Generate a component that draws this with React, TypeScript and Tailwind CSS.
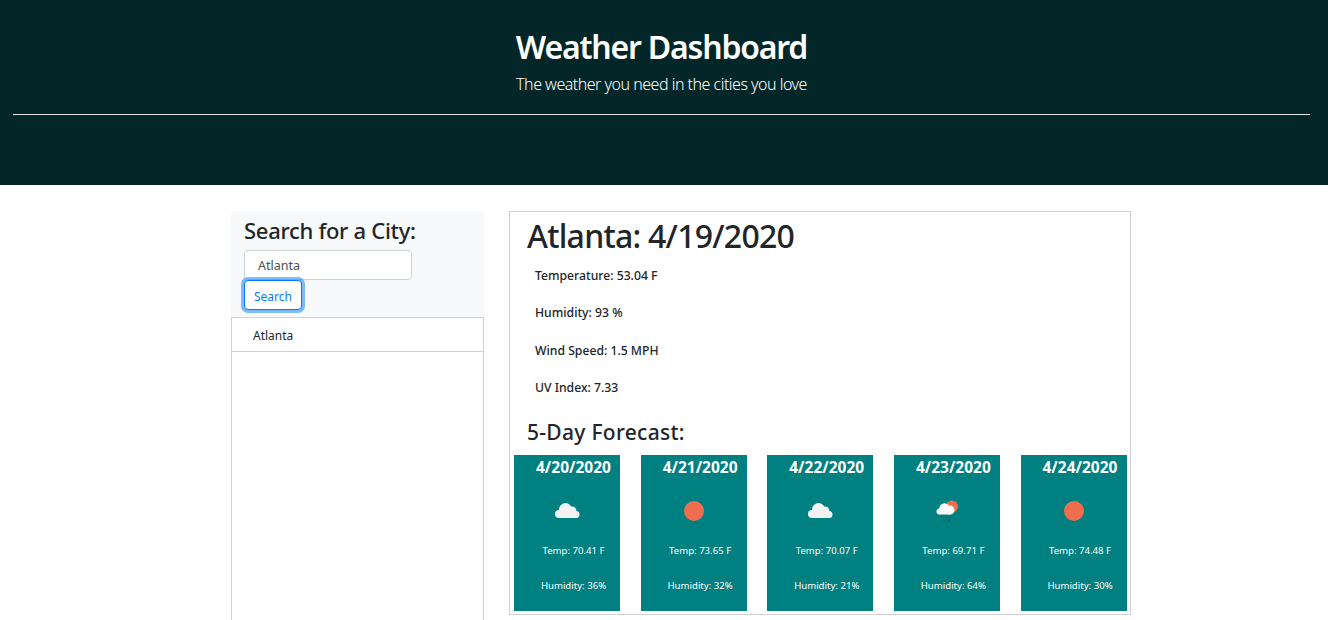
import React from "react";

function Cloud({ className = "" }: { className?: string }) {
  return (
    <svg viewBox="0 0 25 15" className={className}>
      <g fill="#f2f2f2">
        <circle cx="4" cy="11" r="4" />
        <circle cx="10.5" cy="6.5" r="6.5" />
        <circle cx="17" cy="8" r="4.5" />
        <circle cx="21" cy="11.5" r="3.5" />
        <rect x="4" y="9" width="17" height="6" />
      </g>
    </svg>
  );
}

function Sun() {
  return <div className="h-5 w-5 rounded-full bg-[#ee6e4f]" />;
}

function RainSun() {
  return (
    <svg viewBox="0 0 22 22" className="h-[22px] w-[22px]">
      <circle cx="16" cy="6.5" r="6" fill="#ee6e4f" />
      <g fill="#f7f7f7">
        <circle cx="3.5" cy="11.5" r="3" />
        <circle cx="8.5" cy="8.5" r="5.3" />
        <circle cx="14" cy="10" r="4.5" />
        <rect x="3.5" y="9" width="11" height="5.5" />
      </g>
      <g fill="#2f5052">
        <rect x="5" y="15.5" width="1.3" height="2" />
        <rect x="9" y="16" width="1.3" height="2" />
        <rect x="13" y="16" width="1.3" height="2" />
        <rect x="7" y="19" width="1.3" height="2" />
        <rect x="12" y="19.5" width="1.3" height="2" />
      </g>
    </svg>
  );
}

const days = [
  { date: "4/20/2020", icon: <Cloud className="h-[15px] w-[25px]" />, temp: "70.41", hum: "36" },
  { date: "4/21/2020", icon: <Sun />, temp: "73.65", hum: "32" },
  { date: "4/22/2020", icon: <Cloud className="h-[15px] w-[25px]" />, temp: "70.07", hum: "21" },
  { date: "4/23/2020", icon: <RainSun />, temp: "69.71", hum: "64" },
  { date: "4/24/2020", icon: <Sun />, temp: "74.48", hum: "30" },
];

const stats = [
  "Temperature: 53.04 F",
  "Humidity: 93 %",
  "Wind Speed: 1.5 MPH",
  "UV Index: 7.33",
];

export default function App() {
  return (
    <div className="h-[620px] overflow-hidden bg-white font-['Noto_Sans',sans-serif] text-[#212529]">
      <header className="h-[185px] bg-[#032628] pl-[13px] pr-[18px] pt-[26px] text-center text-white">
        <h1 className="text-[32px] leading-[42px] font-semibold tracking-[-1.2px]">Weather Dashboard</h1>
        <p className="mt-[4px] text-[16px] leading-6 font-light tracking-[-0.5px]">The weather you need in the cities you love</p>
        <hr className="mt-[18px] border-t border-[#e6e6e6]" />
      </header>
      <main className="ml-[231px] flex w-[900px] items-start gap-[25px] pt-[26px]">
        <aside className="w-[253px] shrink-0">
          <div className="h-[106px] bg-[#f8f9fa] pl-[13px] pt-[4px]">
            <h2 className="text-[22px] leading-[30px] font-medium tracking-[-0.3px]">Search for a City:</h2>
            <div className="mt-[5px] flex h-[30px] w-[168px] items-center rounded border border-[#ced4da] bg-white pl-[13px] pt-[2px] text-[12.5px] text-[#495057]">Atlanta</div>
            <button className="flex h-[30px] w-[58px] items-center justify-center rounded border border-[#007bff] bg-white pt-[3px] text-[12px] text-[#007bff] shadow-[0_0_0_3px_rgba(0,123,255,0.5)]">Search</button>
          </div>
          <div className="h-[310px] border border-b-0 border-[#d0d0d0] bg-white">
            <div className="flex h-[34px] items-center border-b border-[#d0d0d0] pl-[21px] pt-[2px] text-[12px]">Atlanta</div>
          </div>
        </aside>
        <section className="h-[404px] w-[622px] shrink-0 border border-[#d0d0d0] pl-[4px] pr-[3.5px]">
          <h2 className="pl-[13px] pt-[3px] text-[32px] leading-[42px] font-medium tracking-[-0.75px]">Atlanta: 4/19/2020</h2>
          <ul className="pl-[21px] text-[12.2px] font-medium">
            {stats.map((s) => (
              <li key={s} className="h-[37.4px] leading-[37px]">{s}</li>
            ))}
          </ul>
          <h3 className="mt-[11px] pl-[13px] text-[21px] leading-[28px] font-medium tracking-[0.3px]">5-Day Forecast:</h3>
          <div className="mt-[9px] flex justify-between">
            {days.map((d) => (
              <article key={d.date} className="flex h-[156px] w-[106px] flex-col bg-[#008080] text-white">
                <div className="mt-[2px] pl-[22px] text-[15.5px] leading-5 font-bold">{d.date}</div>
                <div className="mt-[22px] flex h-[24px] items-center justify-center">{d.icon}</div>
                <div className="mt-[21px] pl-[13px] text-center text-[9.6px] leading-[14px]">Temp: {d.temp} F</div>
                <div className="mt-[21px] pl-[13px] text-center text-[9.6px] leading-[14px]">Humidity: {d.hum}%</div>
              </article>
            ))}
          </div>
        </section>
      </main>
    </div>
  );
}
